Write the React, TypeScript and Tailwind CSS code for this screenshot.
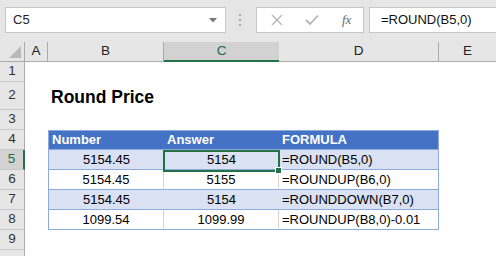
import React from "react";

const font = { fontFamily: '"Liberation Sans", Arial, sans-serif' };

function RowHead({ n, sel, h }: { n?: string; sel?: boolean; h: string }) {
  return (
    <div
      className={`${h} w-[25px] shrink-0 flex items-center justify-center text-[13.5px] border-b border-b-[#c8c8c8] ${
        sel
          ? "bg-[#d2d2d2] text-[#1e6b41] border-r-2 border-r-[#217346]"
          : "bg-[#e6e6e6] text-[#333] border-r border-r-[#ababab]"
      }`}
    >
      {n}
    </div>
  );
}

type Kind = "head" | "band" | "plain";

function TableRow({ n, kind, b, c, d, sel }: { n: string; kind: Kind; b: string; c: string; d: string; sel?: boolean }) {
  const bg = kind === "head" ? "bg-[#4472c4] text-white font-bold" : kind === "band" ? "bg-[#d9e1f2] text-black" : "bg-white text-black";
  const top = kind === "head" ? "border-t" : "";
  const inner = kind === "plain" ? "border-r border-r-[#d4d4d4]" : "";
  const align = kind === "head" ? "justify-start pl-[3px]" : "justify-center";
  return (
    <div className="flex h-[20px]">
      <RowHead n={n} sel={sel} h="h-[20px]" />
      <div className="w-[23px] shrink-0" />
      <div className={`w-[116px] shrink-0 flex items-center ${align} ${bg} ${top} border-l border-b border-[#8ea9db] ${inner}`}>{b}</div>
      <div className={`w-[115px] shrink-0 flex items-center ${align} ${bg} ${top} border-b border-[#8ea9db] ${inner}`}>{c}</div>
      <div className={`w-[160px] shrink-0 flex items-center justify-start pl-[3px] ${bg} ${top} border-b border-r border-[#8ea9db]`}>{d}</div>
      <div className="flex-1" />
    </div>
  );
}

function EmptyRow({ n, h }: { n?: string; h: string }) {
  return (
    <div className={`flex ${h}`}>
      <RowHead n={n} h={h} />
      <div className="flex-1 bg-white" />
    </div>
  );
}

export default function App() {
  return (
    <div className="relative w-[496px] h-[256px] overflow-hidden bg-white text-[13px] text-black" style={font}>
      {/* Top bar */}
      <div className="flex h-[42px] bg-[#e6e6e6] overflow-hidden">
        <div className="shrink-0 ml-[5px] mt-[7px] w-[221px] h-[26px] bg-white border border-[#c6c6c6] flex items-center justify-between pl-[7px] pr-[8px] text-[13px] text-[#222]">
          <span>C5</span>
          <svg width="8" height="5" viewBox="0 0 8 5">
            <path d="M0 0 L8 0 L4 4.5 Z" fill="#777" />
          </svg>
        </div>
        <div className="shrink-0 ml-[13px] mt-[14px] flex flex-col gap-[3px]">
          <div className="w-[2px] h-[2px] bg-[#a6a6a6]" />
          <div className="w-[2px] h-[2px] bg-[#a6a6a6]" />
          <div className="w-[2px] h-[2px] bg-[#a6a6a6]" />
        </div>
        <div className="shrink-0 ml-[15px] mt-[7px] w-[108px] h-[26px] bg-white border border-[#c6c6c6] flex items-center">
          <svg className="ml-[14px]" width="12" height="12" viewBox="0 0 12 12">
            <path d="M1 1 L11 11 M11 1 L1 11" stroke="#b4b4b4" strokeWidth="1.3" />
          </svg>
          <svg className="ml-[22px]" width="14" height="12" viewBox="0 0 14 12">
            <path d="M1 6 L5 10 L13 1.5" stroke="#b4b4b4" strokeWidth="1.8" fill="none" />
          </svg>
          <span className="ml-[23px] italic text-[13px] text-[#666]" style={{ fontFamily: '"Liberation Serif", "Times New Roman", serif' }}>
            fx
          </span>
        </div>
        <div className="shrink-0 ml-[5px] mt-[7px] w-[140px] h-[26px] bg-white border border-[#c6c6c6] flex items-center pl-[11px] text-[13px] text-[#111]">
          =ROUND(B5,0)
        </div>
      </div>

      {/* Column headers */}
      <div className="flex h-[20px] bg-[#e6e6e6] text-[13.5px] text-[#222]">
        <div className="w-[25px] shrink-0 border-r border-b border-[#ababab] relative flex items-end justify-end pr-[3px] pb-[3px]">
          <svg width="12" height="12" viewBox="0 0 12 12">
            <path d="M12 0 L12 12 L0 12 Z" fill="#b9b9b9" />
          </svg>
        </div>
        <div className="w-[23px] shrink-0 border-r border-b border-[#ababab] flex items-center justify-center">A</div>
        <div className="w-[116px] shrink-0 border-r border-b border-[#ababab] flex items-center justify-center">B</div>
        <div className="w-[115px] shrink-0 bg-[#d2d2d2] border-b-2 border-[#217346] flex items-center justify-center text-[#1e6b41]">C</div>
        <div className="w-[160px] shrink-0 border-r border-b border-[#ababab] flex items-center justify-center">D</div>
        <div className="flex-1 border-b border-[#ababab] flex items-center justify-center">E</div>
      </div>

      {/* Grid */}
      <EmptyRow n="1" h="h-[20px]" />
      <div className="flex h-[28px]">
        <RowHead n="2" h="h-[28px]" />
        <div className="w-[23px] shrink-0" />
        <div className="flex-1 flex items-center pl-[3px] pt-[3px] font-bold text-[17.5px]">Round Price</div>
      </div>
      <EmptyRow n="3" h="h-[20px]" />
      <TableRow n="4" kind="head" b="Number" c="Answer" d="FORMULA" />
      <TableRow n="5" kind="band" b="5154.45" c="5154" d="=ROUND(B5,0)" sel />
      <TableRow n="6" kind="plain" b="5154.45" c="5155" d="=ROUNDUP(B6,0)" />
      <TableRow n="7" kind="band" b="5154.45" c="5154" d="=ROUNDDOWN(B7,0)" />
      <TableRow n="8" kind="plain" b="1099.54" c="1099.99" d="=ROUNDUP(B8,0)-0.01" />
      <EmptyRow n="9" h="h-[20px]" />
      <EmptyRow h="h-[20px]" />

      {/* Selection overlay */}
      <div className="absolute left-[163px] top-[150px] w-[117px] h-[22px] border-2 border-[#217346] pointer-events-none" />
      <div className="absolute left-[275px] top-[167px] w-[7px] h-[7px] bg-[#217346] border border-white" />
    </div>
  );
}
